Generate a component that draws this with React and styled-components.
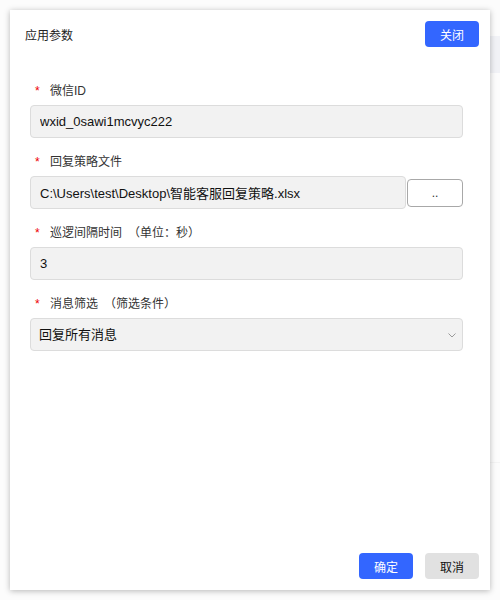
import React, { useState } from "react";
import styled, { createGlobalStyle } from "styled-components";

const GlobalStyle = createGlobalStyle`
  html, body {
    margin: 0;
    padding: 0;
    background: #fcfcfc;
  }
  body {
    font-family: "Liberation Sans", "Noto Sans CJK SC", sans-serif;
    color: #333;
  }
  * {
    box-sizing: border-box;
  }
`;

export default function App() {
  const [wxid, setWxid] = useState("wxid_0sawi1mcvyc222");
  const [file, setFile] = useState("C:\\Users\\test\\Desktop\\智能客服回复策略.xlsx");
  const [interval, setInterval] = useState("3");
  const [filter, setFilter] = useState("all");

  return (
    <>
      <GlobalStyle />
      <Page>
        <Dialog>
          <Header>
            <Titulo>应用参数</Titulo>
            <Boton $primary>关闭</Boton>
          </Header>

          <Form>
            <Campo>
              <Label>
                <Star>*</Star>微信ID
              </Label>
              <Input value={wxid} onChange={(e) => setWxid(e.target.value)} />
            </Campo>

            <Campo>
              <Label>
                <Star>*</Star>回复策略文件
              </Label>
              <FileRow>
                <Input value={file} onChange={(e) => setFile(e.target.value)} />
                <BrowseButton>..</BrowseButton>
              </FileRow>
            </Campo>

            <Campo>
              <Label>
                <Star>*</Star>巡逻间隔时间<Hint>（单位：秒）</Hint>
              </Label>
              <Input value={interval} onChange={(e) => setInterval(e.target.value)} />
            </Campo>

            <Campo>
              <Label>
                <Star>*</Star>消息筛选<Hint>（筛选条件）</Hint>
              </Label>
              <SelectWrap>
                <Select value={filter} onChange={(e) => setFilter(e.target.value)}>
                  <option value="all">回复所有消息</option>
                  <option value="private">仅回复私聊消息</option>
                </Select>
                <Chevron viewBox="0 0 8 5">
                  <path d="M0.5 0.5l3.5 3.5 3.5-3.5" fill="none" stroke="#9a9a9a" strokeWidth="1" />
                </Chevron>
              </SelectWrap>
            </Campo>
          </Form>

          <Footer>
            <Boton $primary>确定</Boton>
            <Boton>取消</Boton>
          </Footer>
        </Dialog>
      </Page>
    </>
  );
}

const Page = styled.div`
  width: 500px;
  height: 600px;
  padding: 10px;
  background:
    linear-gradient(#f1f2f6, #f1f2f6) right 36px / 10px 37px no-repeat,
    linear-gradient(#f4f4f4, #f4f4f4) right 462px / 10px 1px no-repeat;
`;

const Dialog = styled.div`
  width: 480px;
  height: 580px;
  background: #fff;
  box-shadow: 0 1px 6px rgba(0, 0, 0, 0.28);
  display: flex;
  flex-direction: column;
`;

const Header = styled.div`
  display: flex;
  align-items: center;
  justify-content: space-between;
  padding: 11px 11px 0 15px;
`;

const Titulo = styled.h1`
  margin: 0;
  font-size: 12px;
  font-weight: normal;
  color: #222;
`;

const Boton = styled.button`
  width: 54px;
  height: 26px;
  border: none;
  border-radius: 4px;
  font-family: inherit;
  font-size: 12px;
  cursor: pointer;
  background: ${(p) => (p.$primary ? "#3366ff" : "#e1e1e1")};
  color: ${(p) => (p.$primary ? "#fff" : "#111")};
`;

const Form = styled.div`
  flex: 1;
  display: flex;
  flex-direction: column;
  gap: 16px;
  padding: 36px 27px 0 20px;
`;

const Campo = styled.div`
  display: flex;
  flex-direction: column;
  gap: 6px;
`;

const Label = styled.label`
  display: flex;
  align-items: center;
  font-size: 12px;
  line-height: 16px;
  color: #333;
  padding-left: 5px;
`;

const Star = styled.span`
  color: #e00;
  width: 15px;
`;

const Hint = styled.span`
  margin-left: 6px;
`;

const Input = styled.input`
  width: 100%;
  height: 33px;
  padding: 0 9px;
  background: #f2f2f2;
  border: 1px solid #dcdcdc;
  border-radius: 4px;
  font-family: inherit;
  font-size: 13px;
  color: #111;
  outline: none;
`;

const FileRow = styled.div`
  display: flex;
  align-items: center;
  gap: 1px;
`;

const BrowseButton = styled.button`
  flex: 0 0 56px;
  height: 28px;
  background: #fff;
  border: 1px solid #a8a8a8;
  border-radius: 4px;
  font-family: inherit;
  font-size: 12px;
  color: #333;
  cursor: pointer;
`;

const SelectWrap = styled.div`
  position: relative;
`;

const Select = styled.select`
  width: 100%;
  height: 33px;
  padding: 0 8px;
  appearance: none;
  background: #f2f2f2;
  border: 1px solid #dcdcdc;
  border-radius: 4px;
  font-family: inherit;
  font-size: 13px;
  color: #111;
  outline: none;
`;

const Chevron = styled.svg`
  position: absolute;
  right: 7px;
  top: 15px;
  width: 8px;
  height: 5px;
  pointer-events: none;
`;

const Footer = styled.div`
  display: flex;
  justify-content: flex-end;
  gap: 12px;
  padding: 0 11px 11px 0;
`;
